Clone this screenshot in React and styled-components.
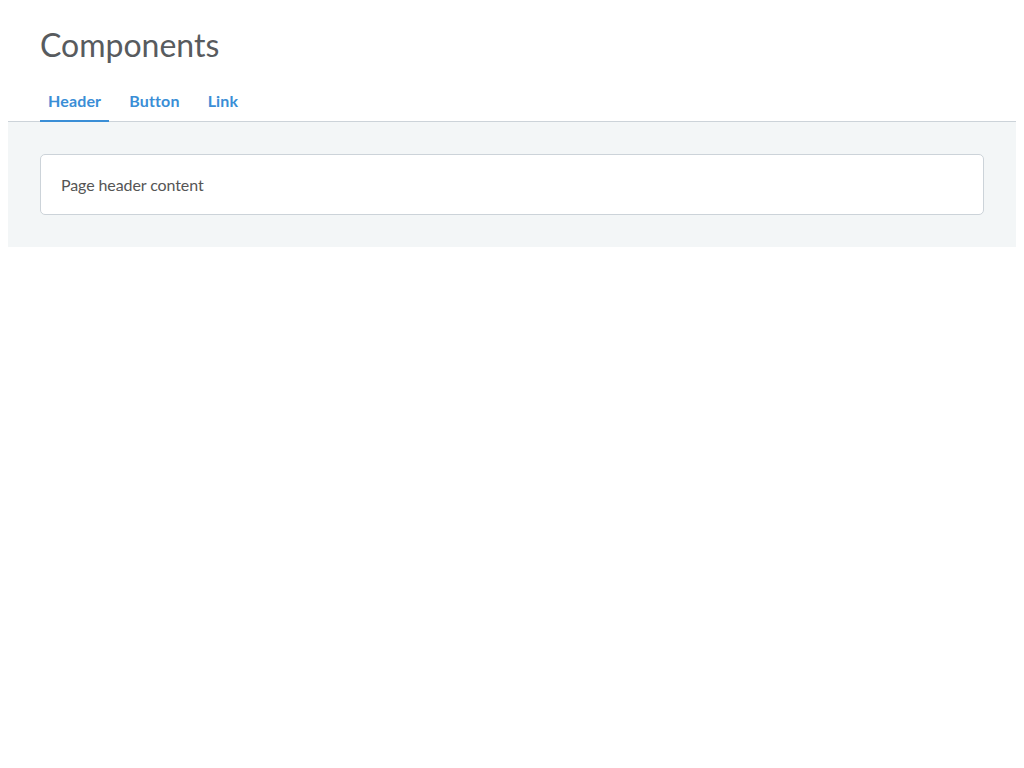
import React, { useState } from 'react';
import styled, { createGlobalStyle } from 'styled-components';

const GlobalStyle = createGlobalStyle`
    body {
        margin: 8px;
        background: #fff;
        font-family: Lato, "Open Sans", sans-serif;
    }
`;

const Page = styled.div`
    display: flex;
    flex-direction: column;
`;

const Header = styled.header`
    padding: 18px 32px 0;
    border-bottom: 1px solid #ccd3d9;
`;

const Title = styled.h1`
    margin: 0 0 19px;
    font-size: 32px;
    font-weight: 400;
    line-height: 38px;
    color: #585b5e;
`;

const Tabs = styled.nav`
    display: flex;
    gap: 12px;
`;

const Tab = styled.button`
    border: none;
    background: transparent;
    padding: 8px 8px 10px;
    margin-bottom: -1px;
    font-family: inherit;
    font-size: 16px;
    font-weight: 700;
    line-height: 19px;
    letter-spacing: 0.15px;
    color: #3a8ed6;
    cursor: pointer;
    border-bottom: 2px solid ${({ active }) => (active ? '#3a8ed6' : 'transparent')};
`;

const Body = styled.main`
    background: #f3f6f7;
    padding: 32px;
`;

const Card = styled.div`
    background: #fff;
    border: 1px solid #ccd3d9;
    border-radius: 5px;
    padding: 20px;
    font-size: 16px;
    line-height: 19px;
    letter-spacing: -0.1px;
    color: #555;
`;

const tabs = ['Header', 'Button', 'Link'];

const content = {
    Header: 'Page header content',
    Button: 'Button content',
    Link: 'Link content',
};

export default function App() {
    const [current, setCurrent] = useState('Header');
    return (
        <Page>
            <GlobalStyle />
            <Header>
                <Title>Components</Title>
                <Tabs>
                    {tabs.map((t) => (
                        <Tab key={t} active={t === current} onClick={() => setCurrent(t)}>
                            {t}
                        </Tab>
                    ))}
                </Tabs>
            </Header>
            <Body>
                <Card>{content[current]}</Card>
            </Body>
        </Page>
    );
}
